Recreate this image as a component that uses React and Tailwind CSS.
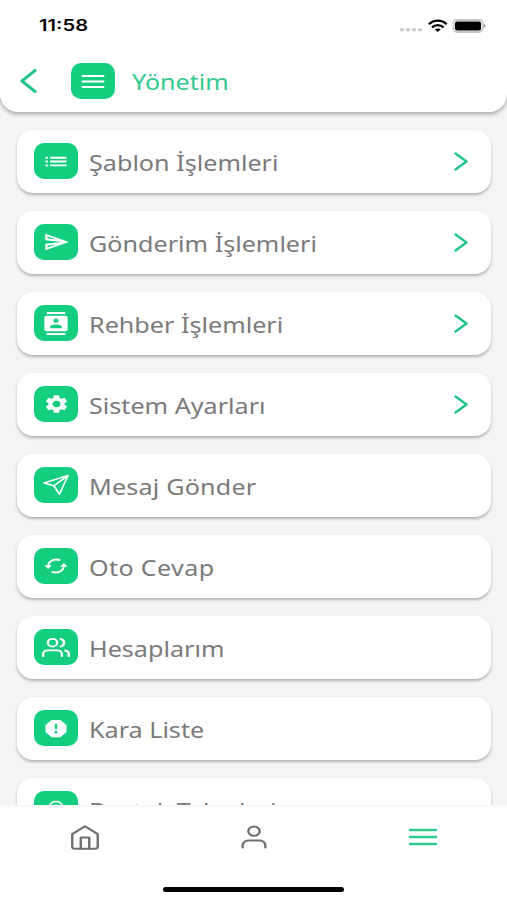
import { MdList, MdOutlineSend, MdContacts, MdSettings, MdReport } from "react-icons/md";
import { FiUsers, FiHome, FiUser, FiHelpCircle } from "react-icons/fi";

function PaperPlane({ className }) {
  return (
    <svg className={className} viewBox="0 0 28 22" fill="none" stroke="currentColor" strokeWidth="1.6" strokeLinejoin="round" strokeLinecap="round">
      <path d="M2 8.900L26 1.500L17.500 20.200L11.800 11.800Z" />
      <path d="M26 1.500L11.800 11.800" />
    </svg>
  );
}

function Sync({ className }) {
  return (
    <svg className={className} viewBox="0 0 24 16" fill="none" stroke="currentColor" strokeWidth="1.900">
      <path d="M4.100 8C4.500 3 10.500 .2 16.300 2.200" />
      <path d="M19.900 8C19.500 13 13.500 15.800 7.700 13.800" />
      <path d="M.3 7.200h7.600L4.100 11Z" fill="currentColor" stroke="none" />
      <path d="M23.700 8.800h-7.600L19.900 5Z" fill="currentColor" stroke="none" />
    </svg>
  );
}

const items = [
  { label: "Şablon İşlemleri", Icon: MdList, arrow: true, icon: "w-7 h-[23px]" },
  { label: "Gönderim İşlemleri", Icon: MdOutlineSend, arrow: true, icon: "w-[27px] h-[22px]" },
  { label: "Rehber İşlemleri", Icon: MdContacts, arrow: true, icon: "w-7 h-[23px]" },
  { label: "Sistem Ayarları", Icon: MdSettings, arrow: true, icon: "w-[27px] h-[22px]" },
  { label: "Mesaj Gönder", Icon: PaperPlane, icon: "w-7 h-[22px]", text: "tracking-[0.15px]" },
  { label: "Oto Cevap", Icon: Sync, icon: "w-6 h-4", text: "tracking-[0.3px]" },
  { label: "Hesaplarım", Icon: FiUsers, icon: "w-[28px] h-[23px]" },
  { label: "Kara Liste", Icon: MdReport, icon: "w-7 h-[23px]" },
  { label: "Destek Talepleri", Icon: FiHelpCircle, icon: "w-[18px] h-[18px]" },
];

function Tile({ children }) {
  return (
    <div className="flex h-9 w-11 shrink-0 items-center justify-center rounded-[10px] bg-[#14ce80] text-white">
      {children}
    </div>
  );
}

function Chevron({ className, d }) {
  return (
    <svg className={className} viewBox="0 0 18 24" preserveAspectRatio="none" fill="none" stroke="#1fc488" strokeWidth="3.1" strokeLinecap="round" strokeLinejoin="round">
      <path d={d} />
    </svg>
  );
}

function StatusBar() {
  return (
    <div className="flex h-[51px] items-center justify-between pl-[39px] pr-[21px]">
      <span className="mt-px origin-left scale-x-[1.3] font-['Inter',sans-serif] text-[15.5px] font-semibold text-black">11:58</span>
      <svg className="h-[14px] w-[87px]" viewBox="0 0 87 14">
        <g fill="#c9c9c9">
          <rect x="1" y="9.2" width="4" height="3" rx="1.2" />
          <rect x="7" y="9.2" width="4" height="3" rx="1.2" />
          <rect x="13" y="9.2" width="4" height="3" rx="1.2" />
          <rect x="19" y="9.2" width="4" height="3" rx="1.2" />
        </g>
        <g fill="none" stroke="#000" strokeWidth="2.2">
          <path d="M29.8 5.2C35 .3 42.600 .3 47.800 5.200" />
          <path d="M33 8.400C36.300 5.400 41.300 5.400 44.600 8.400" />
        </g>
        <path d="M35.900 10.600Q38.800 8.600 41.700 10.600L38.800 13Z" />
        <rect x="54.500" y="1" width="29" height="12" rx="3.600" fill="#fff" stroke="#c4c4c4" strokeWidth="1.800" />
        <rect x="56" y="2.500" width="26" height="9" rx="2" />
        <path d="M84.600 5v4q2-.5 2-2t-2-2" fill="#999" />
      </svg>
    </div>
  );
}

function MenuRow({ item }) {
  const { Icon } = item;
  return (
    <div className="flex h-[63px] shrink-0 items-center rounded-[16px] bg-white pb-px pl-[17px] pr-[23px] shadow-[0_2px_3px_rgba(0,0,0,0.27)]">
      <Tile>
        <Icon className={item.icon} preserveAspectRatio="none" />
      </Tile>
      <span className={`ml-[11px] mt-px origin-left scale-x-[1.143] whitespace-nowrap text-[22px] leading-[30px] text-[#7a7a7a] ${item.text ?? ""}`}>
        {item.label}
      </span>
      {item.arrow && <Chevron className="ml-auto h-[19px] w-[14px]" d="M2 2L16 12L2 22" />}
    </div>
  );
}

export default function App() {
  return (
    <div className="flex h-[900px] w-[507px] flex-col overflow-hidden bg-[#f4f4f4] font-['Noto_Sans','Open_Sans',sans-serif]">
      <header className="z-10 h-[112px] shrink-0 rounded-b-[18px] bg-white shadow-[0_2px_4px_rgba(0,0,0,0.35)]">
        <StatusBar />
        <div className="flex h-[60px] items-center pl-5">
          <Chevron className="h-6 w-[17px]" d="M16 1.500L2 12L16 22.500" />
          <div className="ml-[34px]">
            <Tile>
              <svg className="h-[15px] w-6" viewBox="0 0 24 15" stroke="#fff" strokeWidth="1.800" strokeLinecap="round">
                <path d="M1.500 2h21M1.500 7.500h21M1.500 13h21" />
              </svg>
            </Tile>
          </div>
          <span className="ml-[17px] origin-left scale-x-[1.14] text-[22px] leading-[30px] text-[#34c98f]">Yönetim</span>
        </div>
      </header>
      <main className="flex min-h-0 flex-1 flex-col gap-[18px] overflow-hidden pl-[17px] pr-4 pt-[18px]">
        {items.map((item) => (
          <MenuRow key={item.label} item={item} />
        ))}
      </main>
      <footer className="z-10 flex h-[95px] shrink-0 flex-col items-center border-t-2 border-[#f8f8f8] bg-white">
        <nav className="grid h-[60px] w-full grid-cols-3 place-items-center">
          <FiHome className="h-[27px] w-[34px] text-[#707070]" strokeWidth="1.7" preserveAspectRatio="none" />
          <FiUser className="h-7 w-[34px] text-[#707070]" strokeWidth="1.7" preserveAspectRatio="none" />
          <svg className="h-[18px] w-[30px]" viewBox="0 0 30 18" stroke="#34c98f" strokeWidth="2.500" strokeLinecap="round">
            <path d="M2 2h26M2 9h26M2 16h26" />
          </svg>
        </nav>
        <div className="mt-5 h-[5px] w-[181px] rounded-full bg-black" />
      </footer>
    </div>
  );
}
